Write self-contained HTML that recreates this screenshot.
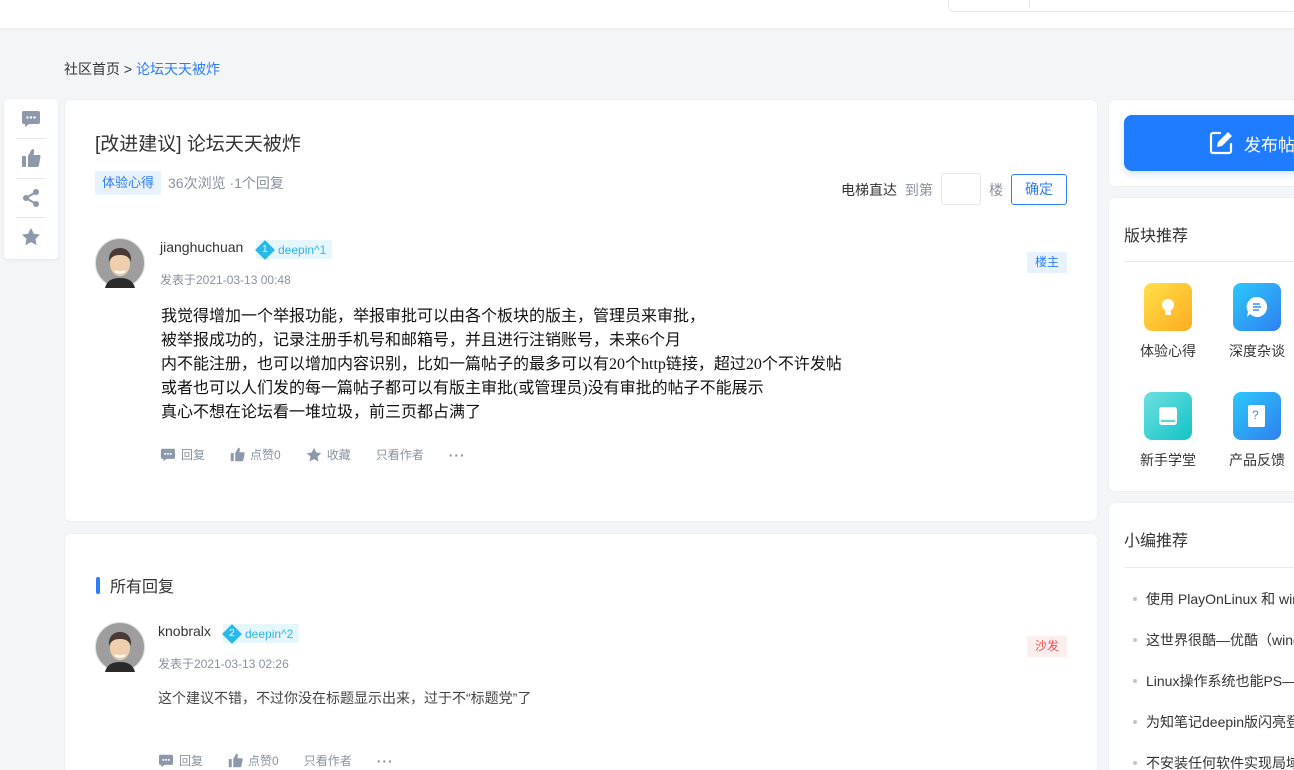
<!DOCTYPE html>
<html style="width:1294px;height:770px;overflow:hidden"><head><meta charset="utf-8"><style>
*{box-sizing:border-box;margin:0;padding:0}
body{width:1294px;height:770px;overflow:hidden;background:#f4f5f7;font-family:"Liberation Sans","Noto Sans CJK SC",sans-serif;color:#333;position:relative}
.abs{position:absolute}
.card{position:absolute;background:#fff;border-radius:6px;box-shadow:0 0 0 1px #eef0f2}
.gray{color:#8a919f}
.act{display:flex;align-items:center;font-size:12px;color:#8a919f}
.act span{display:flex;align-items:center;margin-right:25px}
.act svg{margin-right:5px}
.badge{display:inline-flex;align-items:center;background:#e6f6fd;color:#2fb6e6;font-size:12px;height:19px;padding:0 6px 0 0;border-radius:2px}
.dia{width:14px;height:14px;background:#29b9e8;transform:rotate(45deg);margin:0 6px 0 2px;position:relative}
.dia b{position:absolute;transform:rotate(-45deg);color:#fff;font-size:10px;font-weight:normal;left:4px;top:1px;line-height:12px}
.cat{position:absolute;text-align:center;font-size:14px;color:#333;width:76px}
.cat i{display:block;width:48px;height:48px;border-radius:8px;margin:0 auto 10px}
.li{position:absolute;left:1146px;font-size:14px;color:#333;white-space:nowrap}
.li:before{content:"";position:absolute;left:-13px;top:8px;width:4px;height:4px;border-radius:50%;background:#c0c4cc}
</style></head><body>
<div class="abs" style="left:0;top:0;width:1294px;height:28px;background:#fff;box-shadow:0 1px 3px rgba(0,0,0,.05)"></div>
<div class="abs" style="left:948px;top:-2px;width:360px;height:14px;border:1px solid #e4e6ea;border-radius:0 0 0 6px;background:#fff"></div>
<div class="abs" style="left:1029px;top:0;width:1px;height:8px;background:#e4e6ea"></div>

<div class="abs" style="left:64px;top:59px;font-size:14px">社区首页 &gt; <span style="color:#2d7ef7">论坛天天被炸</span></div>

<div class="abs" style="left:4px;top:99px;width:54px;height:160px;background:#fff;border-radius:4px;box-shadow:0 1px 4px rgba(0,0,0,.06)">
<svg class="abs" style="left:17px;top:11px" width="20" height="18" viewBox="0 0 20 18"><path d="M3 1h14a2 2 0 0 1 2 2v9a2 2 0 0 1-2 2H8l-4 3v-3H3a2 2 0 0 1-2-2V3a2 2 0 0 1 2-2z" fill="#8e98ab"/><circle cx="6.5" cy="7.5" r="1.2" fill="#fff"/><circle cx="10" cy="7.5" r="1.2" fill="#fff"/><circle cx="13.5" cy="7.5" r="1.2" fill="#fff"/></svg>
<div class="abs" style="left:12px;top:39px;width:30px;height:1px;background:#e6e8eb"></div>
<svg class="abs" style="left:17px;top:49px" width="20" height="20" viewBox="0 0 20 20"><rect x="1" y="8" width="4" height="11" rx="1" fill="#8e98ab"/><path d="M7 8l4-7c2 0 2.5 1.5 2 3.5L12.5 7H18a1.5 1.5 0 0 1 1.5 1.8l-1.6 8.5A2 2 0 0 1 16 19H7z" fill="#8e98ab"/></svg>
<div class="abs" style="left:12px;top:79px;width:30px;height:1px;background:#e6e8eb"></div>
<svg class="abs" style="left:17px;top:89px" width="20" height="20" viewBox="0 0 20 20"><circle cx="15" cy="4" r="3" fill="#8e98ab"/><circle cx="5" cy="10" r="3" fill="#8e98ab"/><circle cx="15" cy="16" r="3" fill="#8e98ab"/><path d="M15 4L5 10l10 6" stroke="#8e98ab" stroke-width="2" fill="none"/></svg>
<div class="abs" style="left:12px;top:118px;width:30px;height:1px;background:#e6e8eb"></div>
<svg class="abs" style="left:17px;top:128px" width="20" height="20" viewBox="0 0 20 20"><path d="M10 1l2.8 5.8 6.2.8-4.5 4.3 1.1 6.2L10 15.1 4.4 18.1l1.1-6.2L1 7.6l6.2-.8z" fill="#8e98ab"/></svg>
</div>

<div class="card" style="left:65px;top:100px;width:1032px;height:421px">
<div class="abs" style="left:30px;top:29px;font-size:19px;color:#333">[改进建议] 论坛天天被炸</div>
<div class="abs" style="left:30px;top:71px;height:24px;padding:0 7px;background:#e8f2fe;color:#2d7ef7;font-size:13px;line-height:24px;border-radius:2px">体验心得</div>
<div class="abs gray" style="left:103px;top:73px;font-size:14px">36次浏览 ·1个回复</div>
<div class="abs" style="left:776px;top:80px;font-size:14px">电梯直达 <span class="gray" style="margin-left:4px">到第</span></div>
<div class="abs" style="left:876px;top:73px;width:40px;height:32px;border:1px solid #e4e6ea;border-radius:3px"></div>
<div class="abs gray" style="left:924px;top:80px;font-size:14px">楼</div>
<div class="abs" style="left:946px;top:74px;width:56px;height:31px;border:1px solid #2d7ef7;border-radius:3px;color:#2d7ef7;font-size:14px;text-align:center;line-height:29px">确定</div>

<svg class="abs" style="left:30px;top:138px" width="50" height="50" viewBox="0 0 50 50"><circle cx="25" cy="25" r="24.5" fill="#9e9e9e" stroke="#ddd"/><path d="M10 50c2-8 8-10 15-10s13 2 15 10z" fill="#2a2a2a"/><ellipse cx="25" cy="26" rx="10" ry="12" fill="#f0cfae"/><path d="M14 24c-1-10 5-14 11-14s12 4 11 14c-2-5-5-7-11-7s-9 2-11 7z" fill="#4a3a33"/><path d="M20 33q5 3 10 0" stroke="#fff" stroke-width="2" fill="none"/></svg>
<div class="abs" style="left:95px;top:139px;font-size:14px">jianghuchuan</div>
<div class="abs" style="left:191px;top:140px"><span class="badge"><span class="dia"><b>1</b></span>deepin^1</span></div>
<div class="abs gray" style="left:95px;top:171px;font-size:12px">发表于2021-03-13 00:48</div>
<div class="abs" style="left:962px;top:152px;width:40px;height:21px;background:#e8f2fe;color:#2d7ef7;font-size:12px;text-align:center;line-height:21px">楼主</div>
<div class="abs" style="left:96px;top:205px;font-family:'Liberation Serif','Noto Sans CJK SC',serif;font-size:16px;line-height:24px;color:#111">我觉得增加一个举报功能，举报审批可以由各个板块的版主，管理员来审批，<br>被举报成功的，记录注册手机号和邮箱号，并且进行注销账号，未来6个月<br>内不能注册，也可以增加内容识别，比如一篇帖子的最多可以有20个http链接，超过20个不许发帖<br>或者也可以人们发的每一篇帖子都可以有版主审批(或管理员)没有审批的帖子不能展示<br>真心不想在论坛看一堆垃圾，前三页都占满了</div>
<div class="abs act" style="left:95px;top:346px">
<span><svg width="16" height="14" viewBox="0 0 20 18"><path d="M3 1h14a2 2 0 0 1 2 2v9a2 2 0 0 1-2 2H8l-4 3v-3H3a2 2 0 0 1-2-2V3a2 2 0 0 1 2-2z" fill="#8e98ab"/><circle cx="6.5" cy="7.5" r="1.3" fill="#fff"/><circle cx="10" cy="7.5" r="1.3" fill="#fff"/><circle cx="13.5" cy="7.5" r="1.3" fill="#fff"/></svg>回复</span>
<span><svg width="15" height="15" viewBox="0 0 20 20"><rect x="1" y="8" width="4" height="11" rx="1" fill="#8e98ab"/><path d="M7 8l4-7c2 0 2.5 1.5 2 3.5L12.5 7H18a1.5 1.5 0 0 1 1.5 1.8l-1.6 8.5A2 2 0 0 1 16 19H7z" fill="#8e98ab"/></svg>点赞0</span>
<span><svg width="16" height="16" viewBox="0 0 20 20"><path d="M10 1l2.8 5.8 6.2.8-4.5 4.3 1.1 6.2L10 15.1 4.4 18.1l1.1-6.2L1 7.6l6.2-.8z" fill="#8e98ab"/></svg>收藏</span>
<span>只看作者</span><span style="letter-spacing:1px;font-weight:bold;font-size:14px">···</span></div>
</div>

<div class="card" style="left:65px;top:534px;width:1032px;height:260px">
<div class="abs" style="left:31px;top:43px;width:4px;height:17px;background:#2d7ef7;border-radius:2px"></div>
<div class="abs" style="left:45px;top:39px;font-size:16px">所有回复</div>
<svg class="abs" style="left:30px;top:88px" width="50" height="50" viewBox="0 0 50 50"><circle cx="25" cy="25" r="24.5" fill="#9e9e9e" stroke="#ddd"/><path d="M10 50c2-8 8-10 15-10s13 2 15 10z" fill="#2a2a2a"/><ellipse cx="25" cy="26" rx="10" ry="12" fill="#f0cfae"/><path d="M14 24c-1-10 5-14 11-14s12 4 11 14c-2-5-5-7-11-7s-9 2-11 7z" fill="#4a3a33"/><path d="M20 33q5 3 10 0" stroke="#fff" stroke-width="2" fill="none"/></svg>
<div class="abs" style="left:93px;top:89px;font-size:14px">knobralx</div>
<div class="abs" style="left:158px;top:90px"><span class="badge"><span class="dia"><b>2</b></span>deepin^2</span></div>
<div class="abs gray" style="left:93px;top:121px;font-size:12px">发表于2021-03-13 02:26</div>
<div class="abs" style="left:962px;top:102px;width:40px;height:21px;background:#fdeeee;color:#f05050;font-size:12px;text-align:center;line-height:21px">沙发</div>
<div class="abs" style="left:93px;top:154px;font-size:14px;color:#444">这个建议不错，不过你没在标题显示出来，过于不“标题党”了</div>
<div class="abs act" style="left:93px;top:218px">
<span><svg width="16" height="14" viewBox="0 0 20 18"><path d="M3 1h14a2 2 0 0 1 2 2v9a2 2 0 0 1-2 2H8l-4 3v-3H3a2 2 0 0 1-2-2V3a2 2 0 0 1 2-2z" fill="#8e98ab"/><circle cx="6.5" cy="7.5" r="1.3" fill="#fff"/><circle cx="10" cy="7.5" r="1.3" fill="#fff"/><circle cx="13.5" cy="7.5" r="1.3" fill="#fff"/></svg>回复</span>
<span><svg width="15" height="15" viewBox="0 0 20 20"><rect x="1" y="8" width="4" height="11" rx="1" fill="#8e98ab"/><path d="M7 8l4-7c2 0 2.5 1.5 2 3.5L12.5 7H18a1.5 1.5 0 0 1 1.5 1.8l-1.6 8.5A2 2 0 0 1 16 19H7z" fill="#8e98ab"/></svg>点赞0</span>
<span>只看作者</span><span style="letter-spacing:1px;font-weight:bold;font-size:14px">···</span></div>
</div>

<div class="card" style="left:1109px;top:100px;width:200px;height:86px"></div>
<div class="abs" style="left:1124px;top:115px;width:190px;height:56px;background:#1f7cff;border-radius:8px;box-shadow:0 3px 8px rgba(31,124,255,.2)">
<svg class="abs" style="left:84px;top:15px" width="26" height="26" viewBox="0 0 26 26"><path d="M12 3H5a2 2 0 0 0-2 2v16a2 2 0 0 0 2 2h16a2 2 0 0 0 2-2v-7" stroke="#fff" stroke-width="2.2" fill="none" stroke-linecap="round"/><path d="M20 2l4 4-10 10-5 1 1-5z" fill="#fff"/></svg>
<div class="abs" style="left:120px;top:16px;color:#fff;font-size:17px">发布帖子</div>
</div>
<div class="card" style="left:1109px;top:198px;width:200px;height:293px">
<div class="abs" style="left:15px;top:24px;font-size:16px">版块推荐</div>
<div class="abs" style="left:15px;top:63px;width:190px;height:1px;background:#e8eaed"></div>
</div>
<div class="cat" style="left:1130px;top:283px"><i style="background:linear-gradient(135deg,#ffe04a,#ffab1f)"></i>体验心得</div>
<div class="cat" style="left:1219px;top:283px"><i style="background:linear-gradient(135deg,#2cc8fb,#2f80f0)"></i>深度杂谈</div>
<div class="cat" style="left:1130px;top:392px"><i style="background:linear-gradient(135deg,#6ee0e0,#12c3c6)"></i>新手学堂</div>
<div class="cat" style="left:1219px;top:392px"><i style="background:linear-gradient(135deg,#2cc8fb,#2f80f0)"></i>产品反馈</div>
<svg class="abs" style="left:1156px;top:295px" width="24" height="24" viewBox="0 0 24 24"><circle cx="12" cy="10" r="6" fill="#fff"/><rect x="9" y="16" width="6" height="4" rx="1" fill="#fff"/></svg>
<svg class="abs" style="left:1246px;top:296px" width="22" height="22" viewBox="0 0 22 22"><path d="M11 1a10 10 0 1 1-7 17L1 21l1-5A10 10 0 0 1 11 1z" fill="#fff"/><path d="M7 8h7M7 11h8M7 14h6" stroke="#3a90f3" stroke-width="1.5"/></svg>
<svg class="abs" style="left:1157px;top:405px" width="22" height="22" viewBox="0 0 22 22"><rect x="2" y="2" width="18" height="18" rx="3" fill="#fff"/><path d="M4 16h14" stroke="#2cc8c8" stroke-width="1.5"/></svg>
<svg class="abs" style="left:1246px;top:404px" width="22" height="24" viewBox="0 0 22 24"><rect x="2" y="1" width="17" height="22" rx="2" fill="#fff"/><text x="6" y="15" font-size="12" fill="#3a90f3" font-family="Liberation Sans">?</text></svg>

<div class="card" style="left:1109px;top:503px;width:200px;height:300px">
<div class="abs" style="left:15px;top:24px;font-size:16px">小编推荐</div>
<div class="abs" style="left:15px;top:64px;width:190px;height:1px;background:#e8eaed"></div>
</div>
<div class="li" style="top:589px">使用 PlayOnLinux 和 wine</div>
<div class="li" style="top:630px">这世界很酷—优酷（windows</div>
<div class="li" style="top:671px">Linux操作系统也能PS—</div>
<div class="li" style="top:712px">为知笔记deepin版闪亮登场</div>
<div class="li" style="top:753px">不安装任何软件实现局域网</div>
</body></html>
